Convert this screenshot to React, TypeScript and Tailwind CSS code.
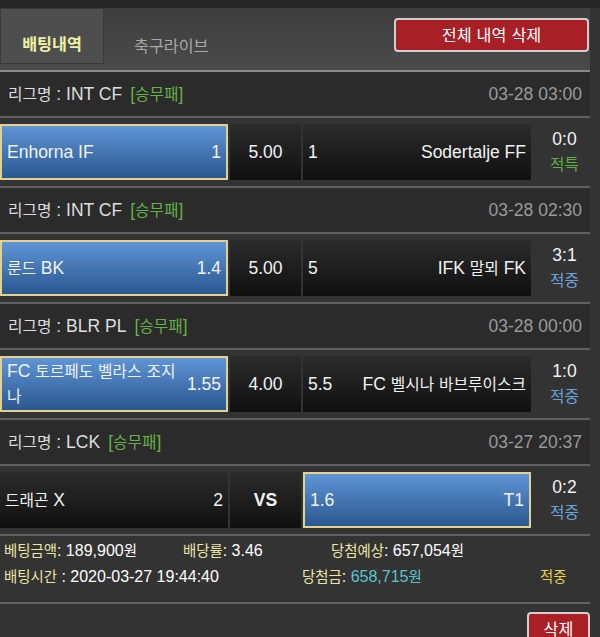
type Side = {
  name: string;
  odds: string;
  picked?: boolean;
};

type Bet = {
  league: string;
  date: string;
  home: Side;
  mid: string;
  away: Side;
  score: string;
  result: string;
  resultColor: string;
};

const bets: Bet[] = [
  {
    league: "INT CF",
    date: "03-28 03:00",
    home: { name: "Enhorna IF", odds: "1", picked: true },
    mid: "5.00",
    away: { name: "Sodertalje FF", odds: "1" },
    score: "0:0",
    result: "적특",
    resultColor: "text-[#5fae45]",
  },
  {
    league: "INT CF",
    date: "03-28 02:30",
    home: { name: "룬드 BK", odds: "1.4", picked: true },
    mid: "5.00",
    away: { name: "IFK 말뫼 FK", odds: "5" },
    score: "3:1",
    result: "적중",
    resultColor: "text-[#6aa3de]",
  },
  {
    league: "BLR PL",
    date: "03-28 00:00",
    home: { name: "FC 토르페도 벨라스 조지나", odds: "1.55", picked: true },
    mid: "4.00",
    away: { name: "FC 벨시나 바브루이스크", odds: "5.5" },
    score: "1:0",
    result: "적중",
    resultColor: "text-[#6aa3de]",
  },
  {
    league: "LCK",
    date: "03-27 20:37",
    home: { name: "드래곤 X", odds: "2" },
    mid: "VS",
    away: { name: "T1", odds: "1.6", picked: true },
    score: "0:2",
    result: "적중",
    resultColor: "text-[#6aa3de]",
  },
];

// hangul glyphs in the shot are narrower than Noto's full-width ones
const ko = (text: string) =>
  text.split(/([\uAC00-\uD7A3]+)/).map((part, i) =>
    /[\uAC00-\uD7A3]/.test(part) ? (
      <span key={i} className="text-[0.9em]">
        {part}
      </span>
    ) : (
      part
    )
  );

const cellBase = "h-full flex items-center px-[5px] text-[17.5px] text-[#f2f2f2] leading-[25px]";
const blue = "bg-gradient-to-b from-[#5f95d6] to-[#2b5890]";
const dark = "bg-gradient-to-b from-[#2c2c2c] to-[#101010]";

function TeamCell({ side, reverse }: { side: Side; reverse?: boolean }) {
  const bg = side.picked ? blue + " border-2 border-[#e3d28e]" : dark;
  return (
    <div className={`${cellBase} ${bg} w-[228px] gap-[6px]`}>
      {reverse ? (
        <>
          <span className="shrink-0">{side.odds}</span>
          <span className="flex-1 text-right">{ko(side.name)}</span>
        </>
      ) : (
        <>
          <span className="flex-1 min-w-0">{ko(side.name)}</span>
          <span className="shrink-0">{side.odds}</span>
        </>
      )}
    </div>
  );
}

function BetBlock({ bet }: { bet: Bet }) {
  return (
    <div>
      <div className="h-[46px] flex items-center justify-between px-2 bg-[#2b2b2b] border-b-2 border-[#616161] text-[17.5px]">
        <div className="text-[#dedede]">
          {ko("리그명")} : {bet.league}
          <span className="ml-2 text-[#66b048]">[{ko("승무패")}]</span>
        </div>
        <div className="text-[#9a9a9a]">{bet.date}</div>
      </div>
      <div className="h-[70px] flex items-center py-[6px] bg-[#333] border-b-2 border-[#616161]">
        <TeamCell side={bet.home} />
        <div
          className={`${cellBase} ${dark} w-[71px] ml-[2px] justify-center ${
            bet.mid === "VS" ? "font-bold" : ""
          }`}
        >
          {bet.mid}
        </div>
        <div className="h-full ml-[2px]">
          <TeamCell side={bet.away} reverse />
        </div>
        <div className="flex-1 pl-[8px] flex flex-col items-center justify-center text-[17.5px] leading-[25px]">
          <span className="text-[#f2f2f2]">{bet.score}</span>
          <span className={bet.resultColor}>{ko(bet.result)}</span>
        </div>
      </div>
    </div>
  );
}

export default function App() {
  return (
    <div className="w-[600px] h-[637px] overflow-hidden bg-[#333] font-['Liberation_Sans','Noto_Sans_CJK_KR',sans-serif]">
      <div className="w-[590px]">
        {/* TOP TABS */}
        <div className="h-[8px] bg-[#262626] w-[600px]" />
        <div className="h-[64px] flex items-start bg-gradient-to-b from-[#3e3e3e] to-[#4a4a4a] border-b-2 border-[#8a8a8a]">
          <div className="w-[104px] h-[56px] flex items-end justify-center pb-[7px] bg-[#4e4e4e] border border-[#3a3a3a] text-[18px] font-bold text-[#eef2a4]">
            {ko("배팅내역")}
          </div>
          <div className="h-[56px] flex items-end pb-[6px] ml-[30px] text-[18px] text-[#a8a8a8]">
            {ko("축구라이브")}
          </div>
          <button className="ml-auto mt-[10px] mr-[1px] w-[195px] h-[34px] rounded-[4px] bg-[#a81f26] border-2 border-[#cfcfcf] text-[18px] text-white leading-none">
            {ko("전체 내역 삭제")}
          </button>
        </div>

        {/* BET LIST */}
        {bets.map((b, i) => (
          <BetBlock key={i} bet={b} />
        ))}

        {/* SUMMARY */}
        <div className="pt-[2px] pb-[12px] px-[4px] text-[16px] leading-[26px] text-white border-b-2 border-[#616161]">
          <div className="flex">
            <div className="w-[179px]">
              <span className="text-[#ece6a4]">{ko("베팅금액")}</span>: 189,900{ko("원")}
            </div>
            <div className="w-[148px]">
              <span className="text-[#ece6a4]">{ko("배당률")}</span>: 3.46
            </div>
            <div>
              <span className="text-[#ece6a4]">{ko("당첨예상")}</span>: 657,054{ko("원")}
            </div>
          </div>
          <div className="flex">
            <div className="w-[298px]">
              <span className="text-[#ece6a4]">{ko("배팅시간")}</span> : 2020-03-27 19:44:40
            </div>
            <div className="w-[238px]">
              <span className="text-[#ece6a4]">{ko("당첨금")}</span>:{" "}
              <span className="text-[#5cc3cc]">658,715{ko("원")}</span>
            </div>
            <div className="text-[#e8d24e]">{ko("적중")}</div>
          </div>
        </div>

        <div className="flex justify-end pt-[8px]">
          <button className="w-[63px] h-[34px] rounded-[4px] bg-[#a81f26] border-2 border-[#cfcfcf] text-[18px] text-white leading-none">
            {ko("삭제")}
          </button>
        </div>
      </div>
    </div>
  );
}
